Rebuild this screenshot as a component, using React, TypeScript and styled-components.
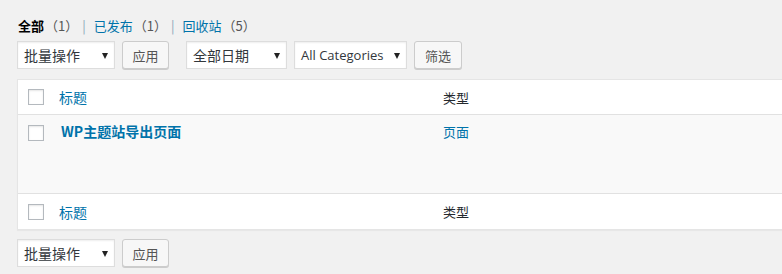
import React from "react";
import styled, { createGlobalStyle } from "styled-components";

const GlobalStyle = createGlobalStyle`
  html, body {
    margin: 0;
    padding: 0;
    background: #f1f1f1;
    overflow: hidden;
  }
  body {
    font-family: "Noto Sans CJK SC", "Open Sans", "Liberation Sans", sans-serif;
    color: #23282d;
    font-size: 13px;
  }
`;

const Page = styled.div`
  width: 782px;
  height: 274px;
  padding: 14px 0 0 17px;
  box-sizing: border-box;
`;

const Views = styled.ul`
  list-style: none;
  margin: 0 0 0 1px;
  padding: 0;
  display: flex;
  align-items: center;
  height: 23px;
  font-size: 13px;
  color: #666;
`;

const ViewItem = styled.li`
  display: flex;
  align-items: center;
`;

const ViewLink = styled.a<{ $current?: boolean }>`
  color: ${(p) => (p.$current ? "#000" : "#0073aa")};
  font-weight: ${(p) => (p.$current ? 600 : 400)};
  text-decoration: none;
`;

const Count = styled.span`
  color: #555;
  margin-left: 1px;
`;

const Sep = styled.span`
  color: #8aa4b8;
  margin: 0 8px 0 4px;
`;

const Nav = styled.div`
  display: flex;
  align-items: center;
  height: 28px;
  margin: 4px 0 10px;
`;

const Group = styled.div`
  display: flex;
  align-items: center;
  gap: 7px;
  margin-right: 17px;
`;

const Select = styled.div<{ $w: number }>`
  width: ${(p) => p.$w}px;
  height: 28px;
  box-sizing: border-box;
  background: #fff;
  border: 1px solid #ddd;
  box-shadow: inset 0 1px 2px rgba(0, 0, 0, 0.07);
  display: flex;
  align-items: center;
  justify-content: space-between;
  padding: 0 6px 0 6px;
  font-size: 14px;
  color: #32373c;
  white-space: nowrap;
`;

const LatinText = styled.span`
  font-family: "Open Sans", "Liberation Sans", sans-serif;
  font-size: 13px;
`;

const Arrow = styled.span`
  width: 0;
  height: 0;
  border-left: 3.5px solid transparent;
  border-right: 3.5px solid transparent;
  border-top: 6px solid #222;
  margin-top: 1px;
  flex-shrink: 0;
`;

const Button = styled.div<{ $w: number }>`
  width: ${(p) => p.$w}px;
  height: 28px;
  box-sizing: border-box;
  background: #f7f7f7;
  border: 1px solid #ccc;
  border-radius: 3px;
  box-shadow: 0 1px 0 #ccc;
  display: flex;
  align-items: center;
  justify-content: center;
  font-size: 13px;
  color: #555;
`;

const Table = styled.div`
  width: 800px;
  background: #fff;
  border: 1px solid #e5e5e5;
  box-shadow: 0 1px 1px rgba(0, 0, 0, 0.04);
`;

const Row = styled.div<{ $h: number; $alt?: boolean; $top?: "none" | "line"; $align?: string }>`
  display: flex;
  align-items: ${(p) => p.$align || "center"};
  height: ${(p) => p.$h}px;
  background: ${(p) => (p.$alt ? "#f9f9f9" : "#fff")};
  border-top: ${(p) => (p.$top === "line" ? "1px solid #e1e1e1" : "none")};
  box-sizing: border-box;
`;

const CheckCell = styled.div<{ $pt?: number }>`
  width: 40px;
  padding-left: 10px;
  padding-top: ${(p) => p.$pt || 0}px;
  box-sizing: border-box;
`;

const Check = styled.span`
  display: block;
  width: 16px;
  height: 16px;
  box-sizing: border-box;
  border: 1px solid #b4b9be;
  background: #fff;
  box-shadow: inset 0 1px 2px rgba(0, 0, 0, 0.1);
`;

const TitleCell = styled.div<{ $pt?: number }>`
  width: 384px;
  padding-left: 1px;
  padding-top: ${(p) => p.$pt || 0}px;
  font-size: 14px;
`;

const TypeCell = styled.div<{ $pt?: number }>`
  flex: 1;
  padding-top: ${(p) => p.$pt || 0}px;
  font-size: 13px;
`;

const SortLink = styled.a`
  color: #0073aa;
  text-decoration: none;
`;

const RowTitle = styled.a`
  color: #0073aa;
  font-weight: 700;
  font-size: 14px;
  text-decoration: none;
  padding-left: 2px;
`;

const TypeLink = styled.a`
  color: #0073aa;
  text-decoration: none;
`;

const BottomNav = styled(Nav)`
  margin: 9px 0 0;
`;

export default function App() {
  return (
    <Page>
      <GlobalStyle />
      <Views>
        <ViewItem>
          <ViewLink $current>全部</ViewLink>
          <Count>（1）</Count>
        </ViewItem>
        <ViewItem>
          <Sep>|</Sep>
          <ViewLink>已发布</ViewLink>
          <Count>（1）</Count>
        </ViewItem>
        <ViewItem>
          <Sep>|</Sep>
          <ViewLink>回收站</ViewLink>
          <Count>（5）</Count>
        </ViewItem>
      </Views>

      <Nav>
        <Group>
          <Select $w={98}>
            批量操作<Arrow />
          </Select>
          <Button $w={47}>应用</Button>
        </Group>
        <Group>
          <Select $w={101}>
            全部日期<Arrow />
          </Select>
          <Select $w={113}>
            <LatinText>All Categories</LatinText>
            <Arrow />
          </Select>
          <Button $w={48}>筛选</Button>
        </Group>
      </Nav>

      <Table>
        <Row $h={34}>
          <CheckCell>
            <Check />
          </CheckCell>
          <TitleCell>
            <SortLink>标题</SortLink>
          </TitleCell>
          <TypeCell>类型</TypeCell>
        </Row>
        <Row $h={79} $alt $top="line" $align="flex-start">
          <CheckCell $pt={10}>
            <Check />
          </CheckCell>
          <TitleCell $pt={6}>
            <RowTitle>WP主题站导出页面</RowTitle>
          </TitleCell>
          <TypeCell $pt={7}>
            <TypeLink>页面</TypeLink>
          </TypeCell>
        </Row>
        <Row $h={36} $top="line">
          <CheckCell>
            <Check />
          </CheckCell>
          <TitleCell>
            <SortLink>标题</SortLink>
          </TitleCell>
          <TypeCell>类型</TypeCell>
        </Row>
      </Table>

      <BottomNav>
        <Group>
          <Select $w={98}>
            批量操作<Arrow />
          </Select>
          <Button $w={47}>应用</Button>
        </Group>
      </BottomNav>
    </Page>
  );
}
